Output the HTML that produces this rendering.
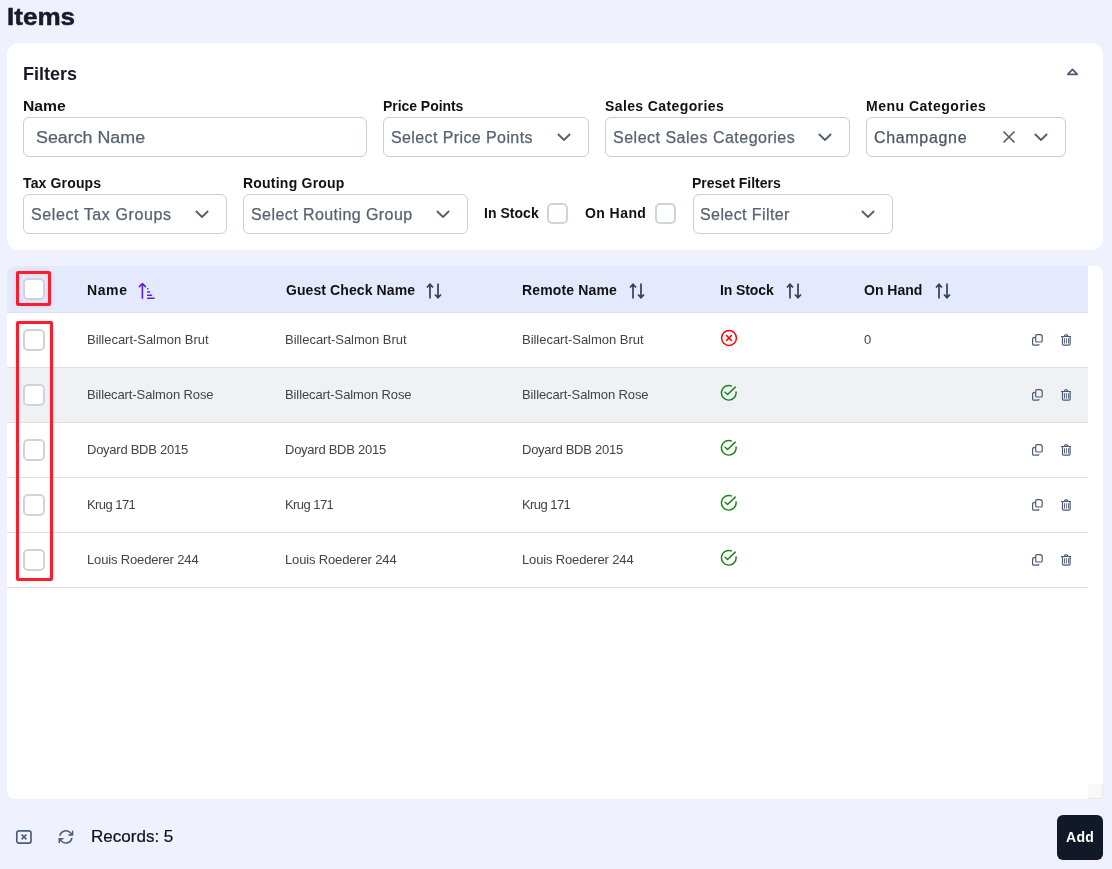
<!DOCTYPE html>
<html><head><meta charset="utf-8">
<style>
*{box-sizing:border-box;margin:0;padding:0}
html,body{width:1112px;height:869px;overflow:hidden}
body{background:#eff2fe;font-family:"Liberation Sans",sans-serif;position:relative;color:#111}
.a{position:absolute;white-space:nowrap;line-height:1}
div.a{will-change:transform}
.card{position:absolute;background:#fff}
.lbl{font-size:14px;font-weight:bold;color:#111}
.inp{position:absolute;height:40px;border:1px solid #c9cdd8;border-radius:6px;background:#fff}
.ph{font-size:16px;color:#586172;-webkit-text-stroke:0.25px currentColor}
.chev{position:absolute;width:14px;height:8px}
.cb{position:absolute;width:22px;height:22px;border:2px solid #cfd4dc;border-radius:5px;background:#fff}
.th{font-size:14px;font-weight:bold;color:#111}
.td{font-size:13px;color:#424249}
.row{position:absolute;left:7px;width:1081px;height:55px;border-bottom:1px solid #dde0e6}
</style></head><body>
<div class="a" style="left:7px;top:4.5px;font-size:24px;font-weight:bold;color:#191927;transform:scaleX(1.085);transform-origin:0 0;-webkit-text-stroke:0.5px #191927">Items</div>
<div class="card" style="left:7px;top:43px;width:1096px;height:207px;border-radius:12px"></div>
<div class="a" style="left:22.5px;top:65px;font-size:18px;font-weight:bold;color:#191927">Filters</div>
<svg class="a" style="left:1066px;top:67px" width="13" height="9" viewBox="0 0 13 9"><path d="M6.5 2.3 L11.3 7.3 L1.7 7.3 Z" fill="none" stroke="#4d5b76" stroke-width="1.7" stroke-linejoin="round"/></svg>
<div class="a lbl" style="left:23px;top:99px;letter-spacing:0px;transform:scaleX(1.12);transform-origin:0 0">Name</div>
<div class="inp" style="left:23px;top:117px;width:344px"></div>
<div class="a ph" style="left:36px;top:130px;letter-spacing:0px;transform:scaleX(1.115);transform-origin:0 0">Search Name</div>
<div class="a lbl" style="left:383px;top:99px;letter-spacing:-0.05px;">Price Points</div>
<div class="inp" style="left:383px;top:117px;width:206px"></div>
<div class="a ph" style="left:391px;top:130px;letter-spacing:0.4px;">Select Price Points</div>
<svg class="chev" style="left:557px;top:133px" viewBox="0 0 14 8"><path d="M0.9 1 L7 7 L13.1 1" fill="none" stroke="#565f70" stroke-width="1.9"/></svg>
<div class="a lbl" style="left:605px;top:99px;letter-spacing:0.39px;">Sales Categories</div>
<div class="inp" style="left:605px;top:117px;width:245px"></div>
<div class="a ph" style="left:613px;top:130px;letter-spacing:0.5px;">Select Sales Categories</div>
<svg class="chev" style="left:818px;top:133px" viewBox="0 0 14 8"><path d="M0.9 1 L7 7 L13.1 1" fill="none" stroke="#565f70" stroke-width="1.9"/></svg>
<div class="a lbl" style="left:866px;top:99px;letter-spacing:0.5px;">Menu Categories</div>
<div class="inp" style="left:866px;top:117px;width:200px"></div>
<div class="a ph" style="left:874px;top:130px;letter-spacing:0.67px;color:#4b5563">Champagne</div>
<svg class="a" style="left:1002px;top:130px" width="14" height="14" viewBox="0 0 14 14"><path d="M1.5 1.5 L12.5 12.5 M12.5 1.5 L1.5 12.5" fill="none" stroke="#565f70" stroke-width="1.7"/></svg>
<svg class="chev" style="left:1034px;top:133px" viewBox="0 0 14 8"><path d="M0.9 1 L7 7 L13.1 1" fill="none" stroke="#565f70" stroke-width="1.9"/></svg>
<div class="a lbl" style="left:23px;top:176px;letter-spacing:0.15px;">Tax Groups</div>
<div class="inp" style="left:23px;top:194px;width:204px"></div>
<div class="a ph" style="left:31px;top:207px;letter-spacing:0.59px;">Select Tax Groups</div>
<svg class="chev" style="left:195px;top:210px" viewBox="0 0 14 8"><path d="M0.9 1 L7 7 L13.1 1" fill="none" stroke="#565f70" stroke-width="1.9"/></svg>
<div class="a lbl" style="left:243px;top:176px;letter-spacing:0.22px;">Routing Group</div>
<div class="inp" style="left:243px;top:194px;width:225px"></div>
<div class="a ph" style="left:251px;top:207px;letter-spacing:0.43px;">Select Routing Group</div>
<svg class="chev" style="left:436px;top:210px" viewBox="0 0 14 8"><path d="M0.9 1 L7 7 L13.1 1" fill="none" stroke="#565f70" stroke-width="1.9"/></svg>
<div class="a lbl" style="left:483.5px;top:206px;letter-spacing:0.04px;">In Stock</div>
<div class="cb" style="left:547px;top:203px;width:21px;height:21px"></div>
<div class="a lbl" style="left:585px;top:206px;letter-spacing:0.43px;">On Hand</div>
<div class="cb" style="left:655px;top:203px;width:21px;height:21px"></div>
<div class="a lbl" style="left:692px;top:176px;letter-spacing:0px;">Preset Filters</div>
<div class="inp" style="left:693px;top:194px;width:200px"></div>
<div class="a ph" style="left:700px;top:207px;letter-spacing:0.41px;">Select Filter</div>
<svg class="chev" style="left:861px;top:210px" viewBox="0 0 14 8"><path d="M0.9 1 L7 7 L13.1 1" fill="none" stroke="#565f70" stroke-width="1.9"/></svg>
<div class="card" style="left:7px;top:266px;width:1096px;height:533px;border-radius:8px 8px 0 8px;overflow:hidden">
  <div style="position:absolute;left:0;top:0;width:1081px;height:47px;background:#e4e9fe;border-bottom:1px solid #dddfe5"></div>
  <div style="position:absolute;left:1081px;top:518px;width:15px;height:15px;background:#f8f8f8;border-right:1px solid #e9e9e9;border-bottom:1px solid #e9e9e9"></div>
</div>
<div class="cb" style="left:23px;top:278px"></div>
<div class="a th" style="left:86.5px;top:283px;letter-spacing:0.6px">Name</div>
<svg class="a" style="left:138px;top:282px" width="18" height="18" viewBox="0 0 18 18"><path d="M4.4 16.2 V1.8 M1.4 4.6 L4.4 1.5 L7.4 4.6" fill="none" stroke="#5f1fd8" stroke-width="1.6" stroke-linecap="round" stroke-linejoin="round"/><path d="M9.6 6.8 H9.8 M9.6 10 H11.6 M9.6 13.2 H13.5 M9.6 16.2 H16" fill="none" stroke="#5f1fd8" stroke-width="1.5" stroke-linecap="round"/></svg>
<div class="a th" style="left:285.5px;top:283px;letter-spacing:0.09px">Guest Check Name</div>
<svg class="a sorti" style="left:426px;top:283px" width="16" height="16" viewBox="0 0 16 16"><path d="M4 15.5 V1.5 M1 4.5 L4 1.3 L7 4.5 M12 0.5 V14.5 M9 11.5 L12 14.7 L15 11.5" fill="none" stroke="#334155" stroke-width="1.7"/></svg>
<div class="a th" style="left:522px;top:283px;letter-spacing:0.15px">Remote Name</div>
<svg class="a sorti" style="left:629px;top:283px" width="16" height="16" viewBox="0 0 16 16"><path d="M4 15.5 V1.5 M1 4.5 L4 1.3 L7 4.5 M12 0.5 V14.5 M9 11.5 L12 14.7 L15 11.5" fill="none" stroke="#334155" stroke-width="1.7"/></svg>
<div class="a th" style="left:720px;top:283px;letter-spacing:-0.1px">In Stock</div>
<svg class="a sorti" style="left:786px;top:283px" width="16" height="16" viewBox="0 0 16 16"><path d="M4 15.5 V1.5 M1 4.5 L4 1.3 L7 4.5 M12 0.5 V14.5 M9 11.5 L12 14.7 L15 11.5" fill="none" stroke="#334155" stroke-width="1.7"/></svg>
<div class="a th" style="left:864px;top:283px;letter-spacing:0px">On Hand</div>
<svg class="a sorti" style="left:935px;top:283px" width="16" height="16" viewBox="0 0 16 16"><path d="M4 15.5 V1.5 M1 4.5 L4 1.3 L7 4.5 M12 0.5 V14.5 M9 11.5 L12 14.7 L15 11.5" fill="none" stroke="#334155" stroke-width="1.7"/></svg>
<div class="row" style="top:313px;background:#fff"></div>
<div class="cb" style="left:23px;top:329px"></div>
<div class="a td" style="left:87px;top:333px;letter-spacing:-0.03px">Billecart-Salmon Brut</div>
<div class="a td" style="left:285px;top:333px;letter-spacing:-0.03px">Billecart-Salmon Brut</div>
<div class="a td" style="left:522px;top:333px;letter-spacing:-0.03px">Billecart-Salmon Brut</div>
<svg class="a" style="left:719.5px;top:329px" width="18" height="18" viewBox="0 0 24 24"><circle cx="12" cy="12" r="9.9" fill="none" stroke="#f00" stroke-width="2"/><line x1="15.3" y1="8.7" x2="8.7" y2="15.3" stroke="#f00" stroke-width="2.1" stroke-linecap="round"/><line x1="8.7" y1="8.7" x2="15.3" y2="15.3" stroke="#f00" stroke-width="2.1" stroke-linecap="round"/></svg>
<div class="a td" style="left:864px;top:333px">0</div>
<svg class="a" style="left:1031px;top:333px" width="13" height="14" viewBox="0 0 13 14"><path d="M6 1.7 H9 Q11.2 1.7 11.2 3.9 V7.7 Q11.2 9 9.9 9 H6 Q4.7 9 4.7 7.7 V3 Q4.7 1.7 6 1.7 Z" fill="none" stroke="#4a5a74" stroke-width="1.2"/><path d="M4.4 4.3 Q1.6 4.3 1.6 6.3 V10.9 Q1.6 12.2 2.9 12.2 H6.6 Q7.9 12.2 7.9 10.9" fill="none" stroke="#4a5a74" stroke-width="1.2"/></svg>
<svg class="a" style="left:1060px;top:333px" width="12" height="14" viewBox="0 0 12 14"><path d="M1 3.5 H11 M4.3 3.4 L4.8 2.3 Q5 1.9 5.4 1.9 H6.8 Q7.2 1.9 7.4 2.3 L7.9 3.4 M2.5 3.6 V11 Q2.5 12.2 3.7 12.2 H8.9 Q10.1 12.2 10.1 11 V3.6" fill="none" stroke="#4a5a74" stroke-width="1.2"/><path d="M4.5 5.2 V10.5 M6.4 5.2 V10.5 M8.5 5.2 V10.5" fill="none" stroke="#4a5a74" stroke-width="0.9"/></svg>
<div class="row" style="top:368px;background:#f0f1f5"></div>
<div class="cb" style="left:23px;top:384px"></div>
<div class="a td" style="left:87px;top:388px;letter-spacing:-0.1px">Billecart-Salmon Rose</div>
<div class="a td" style="left:285px;top:388px;letter-spacing:-0.1px">Billecart-Salmon Rose</div>
<div class="a td" style="left:522px;top:388px;letter-spacing:-0.1px">Billecart-Salmon Rose</div>
<svg class="a" style="left:719.8px;top:384.2px" width="17.6" height="17.6" viewBox="0 0 24 24"><path d="M21.9 10.8 A10 10 0 1 1 15.4 2.6" fill="none" stroke="#148414" stroke-width="2" stroke-linecap="round"/><path d="M6.9 11.2 L10.3 14.3 L20.8 4.3" fill="none" stroke="#148414" stroke-width="2" stroke-linecap="round" stroke-linejoin="round"/></svg>
<svg class="a" style="left:1031px;top:388px" width="13" height="14" viewBox="0 0 13 14"><path d="M6 1.7 H9 Q11.2 1.7 11.2 3.9 V7.7 Q11.2 9 9.9 9 H6 Q4.7 9 4.7 7.7 V3 Q4.7 1.7 6 1.7 Z" fill="none" stroke="#4a5a74" stroke-width="1.2"/><path d="M4.4 4.3 Q1.6 4.3 1.6 6.3 V10.9 Q1.6 12.2 2.9 12.2 H6.6 Q7.9 12.2 7.9 10.9" fill="none" stroke="#4a5a74" stroke-width="1.2"/></svg>
<svg class="a" style="left:1060px;top:388px" width="12" height="14" viewBox="0 0 12 14"><path d="M1 3.5 H11 M4.3 3.4 L4.8 2.3 Q5 1.9 5.4 1.9 H6.8 Q7.2 1.9 7.4 2.3 L7.9 3.4 M2.5 3.6 V11 Q2.5 12.2 3.7 12.2 H8.9 Q10.1 12.2 10.1 11 V3.6" fill="none" stroke="#4a5a74" stroke-width="1.2"/><path d="M4.5 5.2 V10.5 M6.4 5.2 V10.5 M8.5 5.2 V10.5" fill="none" stroke="#4a5a74" stroke-width="0.9"/></svg>
<div class="row" style="top:423px;background:#fff"></div>
<div class="cb" style="left:23px;top:439px"></div>
<div class="a td" style="left:87px;top:443px;letter-spacing:-0.26px">Doyard BDB 2015</div>
<div class="a td" style="left:285px;top:443px;letter-spacing:-0.26px">Doyard BDB 2015</div>
<div class="a td" style="left:522px;top:443px;letter-spacing:-0.26px">Doyard BDB 2015</div>
<svg class="a" style="left:719.8px;top:439.2px" width="17.6" height="17.6" viewBox="0 0 24 24"><path d="M21.9 10.8 A10 10 0 1 1 15.4 2.6" fill="none" stroke="#148414" stroke-width="2" stroke-linecap="round"/><path d="M6.9 11.2 L10.3 14.3 L20.8 4.3" fill="none" stroke="#148414" stroke-width="2" stroke-linecap="round" stroke-linejoin="round"/></svg>
<svg class="a" style="left:1031px;top:443px" width="13" height="14" viewBox="0 0 13 14"><path d="M6 1.7 H9 Q11.2 1.7 11.2 3.9 V7.7 Q11.2 9 9.9 9 H6 Q4.7 9 4.7 7.7 V3 Q4.7 1.7 6 1.7 Z" fill="none" stroke="#4a5a74" stroke-width="1.2"/><path d="M4.4 4.3 Q1.6 4.3 1.6 6.3 V10.9 Q1.6 12.2 2.9 12.2 H6.6 Q7.9 12.2 7.9 10.9" fill="none" stroke="#4a5a74" stroke-width="1.2"/></svg>
<svg class="a" style="left:1060px;top:443px" width="12" height="14" viewBox="0 0 12 14"><path d="M1 3.5 H11 M4.3 3.4 L4.8 2.3 Q5 1.9 5.4 1.9 H6.8 Q7.2 1.9 7.4 2.3 L7.9 3.4 M2.5 3.6 V11 Q2.5 12.2 3.7 12.2 H8.9 Q10.1 12.2 10.1 11 V3.6" fill="none" stroke="#4a5a74" stroke-width="1.2"/><path d="M4.5 5.2 V10.5 M6.4 5.2 V10.5 M8.5 5.2 V10.5" fill="none" stroke="#4a5a74" stroke-width="0.9"/></svg>
<div class="row" style="top:478px;background:#fff"></div>
<div class="cb" style="left:23px;top:494px"></div>
<div class="a td" style="left:87px;top:498px;letter-spacing:-0.57px">Krug 171</div>
<div class="a td" style="left:285px;top:498px;letter-spacing:-0.57px">Krug 171</div>
<div class="a td" style="left:522px;top:498px;letter-spacing:-0.57px">Krug 171</div>
<svg class="a" style="left:719.8px;top:494.2px" width="17.6" height="17.6" viewBox="0 0 24 24"><path d="M21.9 10.8 A10 10 0 1 1 15.4 2.6" fill="none" stroke="#148414" stroke-width="2" stroke-linecap="round"/><path d="M6.9 11.2 L10.3 14.3 L20.8 4.3" fill="none" stroke="#148414" stroke-width="2" stroke-linecap="round" stroke-linejoin="round"/></svg>
<svg class="a" style="left:1031px;top:498px" width="13" height="14" viewBox="0 0 13 14"><path d="M6 1.7 H9 Q11.2 1.7 11.2 3.9 V7.7 Q11.2 9 9.9 9 H6 Q4.7 9 4.7 7.7 V3 Q4.7 1.7 6 1.7 Z" fill="none" stroke="#4a5a74" stroke-width="1.2"/><path d="M4.4 4.3 Q1.6 4.3 1.6 6.3 V10.9 Q1.6 12.2 2.9 12.2 H6.6 Q7.9 12.2 7.9 10.9" fill="none" stroke="#4a5a74" stroke-width="1.2"/></svg>
<svg class="a" style="left:1060px;top:498px" width="12" height="14" viewBox="0 0 12 14"><path d="M1 3.5 H11 M4.3 3.4 L4.8 2.3 Q5 1.9 5.4 1.9 H6.8 Q7.2 1.9 7.4 2.3 L7.9 3.4 M2.5 3.6 V11 Q2.5 12.2 3.7 12.2 H8.9 Q10.1 12.2 10.1 11 V3.6" fill="none" stroke="#4a5a74" stroke-width="1.2"/><path d="M4.5 5.2 V10.5 M6.4 5.2 V10.5 M8.5 5.2 V10.5" fill="none" stroke="#4a5a74" stroke-width="0.9"/></svg>
<div class="row" style="top:533px;background:#fff"></div>
<div class="cb" style="left:23px;top:549px"></div>
<div class="a td" style="left:87px;top:553px;letter-spacing:-0.15px">Louis Roederer 244</div>
<div class="a td" style="left:285px;top:553px;letter-spacing:-0.15px">Louis Roederer 244</div>
<div class="a td" style="left:522px;top:553px;letter-spacing:-0.15px">Louis Roederer 244</div>
<svg class="a" style="left:719.8px;top:549.2px" width="17.6" height="17.6" viewBox="0 0 24 24"><path d="M21.9 10.8 A10 10 0 1 1 15.4 2.6" fill="none" stroke="#148414" stroke-width="2" stroke-linecap="round"/><path d="M6.9 11.2 L10.3 14.3 L20.8 4.3" fill="none" stroke="#148414" stroke-width="2" stroke-linecap="round" stroke-linejoin="round"/></svg>
<svg class="a" style="left:1031px;top:553px" width="13" height="14" viewBox="0 0 13 14"><path d="M6 1.7 H9 Q11.2 1.7 11.2 3.9 V7.7 Q11.2 9 9.9 9 H6 Q4.7 9 4.7 7.7 V3 Q4.7 1.7 6 1.7 Z" fill="none" stroke="#4a5a74" stroke-width="1.2"/><path d="M4.4 4.3 Q1.6 4.3 1.6 6.3 V10.9 Q1.6 12.2 2.9 12.2 H6.6 Q7.9 12.2 7.9 10.9" fill="none" stroke="#4a5a74" stroke-width="1.2"/></svg>
<svg class="a" style="left:1060px;top:553px" width="12" height="14" viewBox="0 0 12 14"><path d="M1 3.5 H11 M4.3 3.4 L4.8 2.3 Q5 1.9 5.4 1.9 H6.8 Q7.2 1.9 7.4 2.3 L7.9 3.4 M2.5 3.6 V11 Q2.5 12.2 3.7 12.2 H8.9 Q10.1 12.2 10.1 11 V3.6" fill="none" stroke="#4a5a74" stroke-width="1.2"/><path d="M4.5 5.2 V10.5 M6.4 5.2 V10.5 M8.5 5.2 V10.5" fill="none" stroke="#4a5a74" stroke-width="0.9"/></svg>
<div class="a" style="left:16px;top:271px;width:35px;height:34.5px;border:3px solid #f71e30;border-radius:2px;box-shadow:0 0 4px rgba(0,0,0,0.10),inset 0 0 4px rgba(0,0,0,0.10)"></div>
<div class="a" style="left:16px;top:321px;width:37px;height:259.5px;border:3px solid #f71e30;border-radius:2px;box-shadow:0 0 4px rgba(0,0,0,0.10),inset 0 0 4px rgba(0,0,0,0.06)"></div>

<svg class="a" style="left:15px;top:829px" width="18" height="16" viewBox="0 0 18 16"><rect x="1.8" y="1.8" width="14.2" height="12.3" rx="2.2" fill="none" stroke="#4b5b78" stroke-width="1.65"/><path d="M6.6 5.6 L11.4 10.4 M11.4 5.6 L6.6 10.4" stroke="#4b5b78" stroke-width="1.5"/></svg>
<svg class="a" style="left:57.1px;top:828.3px" width="17.8" height="17.8" viewBox="0 0 24 24"><path d="M16.023 9.348h4.992v-.001M2.985 19.644v-4.992m0 0h4.992m-4.993 0 3.181 3.183a8.25 8.25 0 0 0 13.803-3.7M4.031 9.865a8.25 8.25 0 0 1 13.803-3.7l3.181 3.182m0-4.991v4.99" fill="none" stroke="#4b5b78" stroke-width="2" stroke-linecap="round" stroke-linejoin="round"/></svg>
<div class="a" style="left:91px;top:828.5px;font-size:16px;color:#111;transform:scaleX(1.064);transform-origin:0 0;-webkit-text-stroke:0.2px #111">Records: 5</div>
<div class="a" style="left:1057px;top:815px;width:46px;height:45px;background:#111827;border-radius:6px"></div>
<div class="a" style="left:1065.5px;top:830px;font-size:14px;font-weight:bold;color:#fff;letter-spacing:0.3px">Add</div>
</body></html>
